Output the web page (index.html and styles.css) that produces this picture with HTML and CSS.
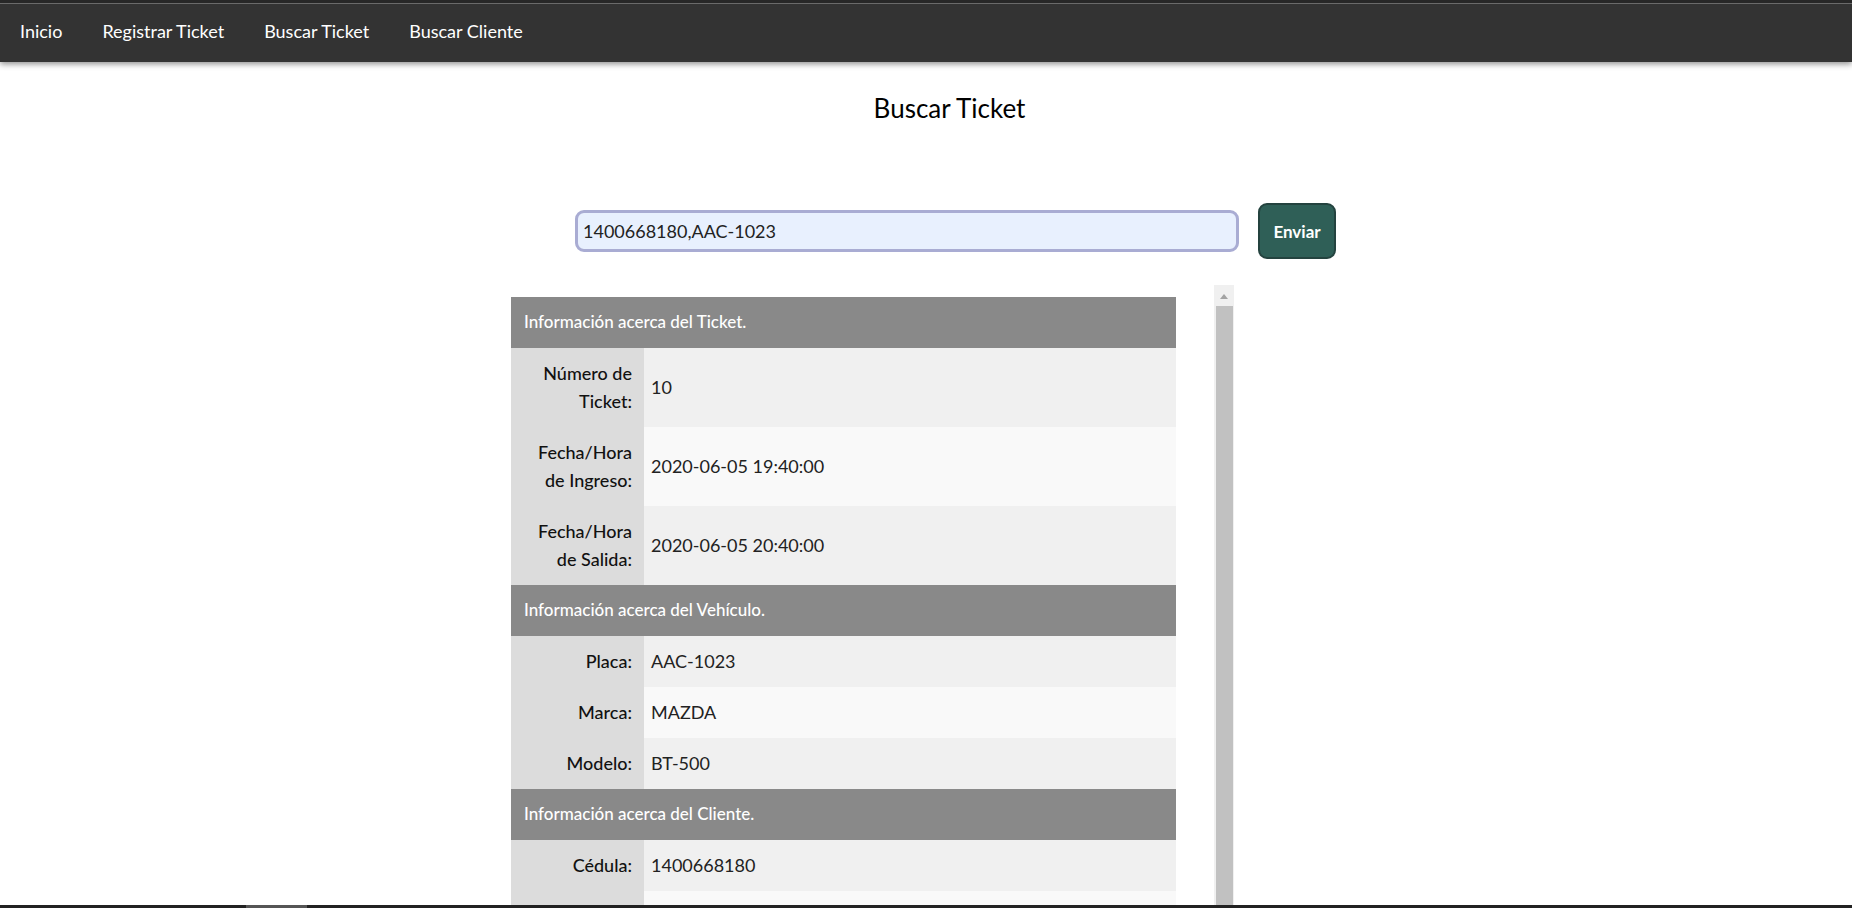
FILE: index.html
```html
<!DOCTYPE html>
<html lang="es">
<head>
<meta charset="utf-8">
<title>Buscar Ticket</title>
<link rel="stylesheet" href="styles.css">
</head>
<body>
<header class="nav">
  <div class="nav-topline"></div>
  <nav class="nav-links">
    <a href="#" class="nav-link">Inicio</a>
    <a href="#" class="nav-link">Registrar Ticket</a>
    <a href="#" class="nav-link">Buscar Ticket</a>
    <a href="#" class="nav-link">Buscar Cliente</a>
  </nav>
</header>

<main class="main">
  <h1 class="title">Buscar Ticket</h1>

  <form class="search">
    <input class="search-input" type="text" value="1400668180,AAC-1023">
    <button class="search-btn" type="button">Enviar</button>
  </form>

  <section class="results">
    <div class="results-body">
      <table class="info">
        <tbody>
          <tr class="sec"><th colspan="2">Información acerca del Ticket.</th></tr>
          <tr class="odd"><td class="lbl">Número de Ticket:</td><td class="val">10</td></tr>
          <tr class="even"><td class="lbl">Fecha/Hora de Ingreso:</td><td class="val">2020-06-05 19:40:00</td></tr>
          <tr class="odd"><td class="lbl">Fecha/Hora de Salida:</td><td class="val">2020-06-05 20:40:00</td></tr>
          <tr class="sec"><th colspan="2">Información acerca del Vehículo.</th></tr>
          <tr class="odd"><td class="lbl">Placa:</td><td class="val">AAC-1023</td></tr>
          <tr class="even"><td class="lbl">Marca:</td><td class="val">MAZDA</td></tr>
          <tr class="odd"><td class="lbl">Modelo:</td><td class="val">BT-500</td></tr>
          <tr class="sec"><th colspan="2">Información acerca del Cliente.</th></tr>
          <tr class="odd"><td class="lbl">Cédula:</td><td class="val">1400668180</td></tr>
          <tr class="even"><td class="lbl">&nbsp;</td><td class="val">&nbsp;</td></tr>
        </tbody>
      </table>
    </div>
    <div class="scrollbar">
      <div class="scroll-arrow"></div>
      <div class="scroll-thumb"></div>
    </div>
  </section>
</main>

<div class="hscroll"><div class="hscroll-thumb"></div></div>
</body>
</html>
```

FILE: styles.css
```css
html, body {
  margin: 0;
  padding: 0;
  height: 908px;
  overflow: hidden;
  background: #ffffff;
  font-family: "Lato", "Open Sans", sans-serif;
  color: #111;
}

.nav {
  background: #333333;
  height: 62px;
  box-shadow: 0 2px 6px rgba(0, 0, 0, 0.45);
  position: relative;
  z-index: 2;
}

.nav-topline {
  height: 3px;
  background: #272727;
  border-bottom: 1px solid #6a6a6a;
}

.nav-links {
  display: flex;
  align-items: center;
  height: 53px;
}

.nav-link {
  color: #ffffff;
  text-decoration: none;
  font-size: 18px;
  padding: 0 20px;
}

.main {
  display: flex;
  flex-direction: column;
}

.title {
  margin: 30px 0 0 0;
  font-size: 26px;
  line-height: 32px;
  font-weight: 400;
  text-align: center;
  padding-left: 47px;
  color: #000;
}

.search {
  display: flex;
  align-items: center;
  gap: 19px;
  margin: 79px 0 0 575px;
}

.search-input {
  box-sizing: border-box;
  width: 664px;
  height: 42px;
  border: 3px solid #a9acd3;
  border-radius: 9px;
  background: #e8f0fe;
  font-family: "Lato", sans-serif;
  font-size: 18px;
  color: #222;
  padding: 0 5px;
  outline: none;
}

.search-btn {
  box-sizing: border-box;
  width: 78px;
  height: 56px;
  border: 2px solid #24433f;
  border-radius: 9px;
  background: #2f5f57;
  color: #fff;
  font-family: "Lato", sans-serif;
  font-weight: 700;
  font-size: 17px;
  padding: 0;
}

.results {
  display: flex;
  width: 723px;
  margin: 26px 0 0 511px;
}

.results-body {
  flex: 1;
  padding-top: 12px;
}

.info {
  width: 665px;
  border-collapse: collapse;
  font-size: 18px;
  line-height: 28px;
}

.info th {
  background: #898989;
  color: #fff;
  text-align: left;
  font-weight: 500;
  font-size: 17px;
  padding: 11px 13px 12px 13px;
}

.info td {
  padding: 11px 0 12px 0;
}

.info .lbl {
  width: 111px;
  background: #dcdcdc;
  text-align: right;
  padding-left: 10px;
  padding-right: 12px;
  font-weight: 500;
  color: #111;
}

.info .val {
  padding-left: 7px;
  color: #222;
  font-weight: 400;
}

.info .odd .val { background: #f0f0f0; }
.info .even .val { background: #f9f9f9; }

.scrollbar {
  width: 20px;
  background: #f0f0f0;
  display: flex;
  flex-direction: column;
  align-items: center;
  height: 640px;
}

.scroll-arrow {
  width: 0;
  height: 0;
  margin-top: 9px;
  border-left: 4px solid transparent;
  border-right: 4px solid transparent;
  border-bottom: 5px solid #a3a3a3;
}

.scroll-thumb {
  margin-top: 7px;
  width: 17px;
  flex: 1;
  background: #c1c1c1;
}

.hscroll {
  position: fixed;
  left: 0;
  right: 0;
  bottom: 0;
  height: 3px;
  background: #222222;
  z-index: 5;
}

.hscroll-thumb {
  margin-left: 246px;
  width: 61px;
  height: 3px;
  background: #555555;
}
```
